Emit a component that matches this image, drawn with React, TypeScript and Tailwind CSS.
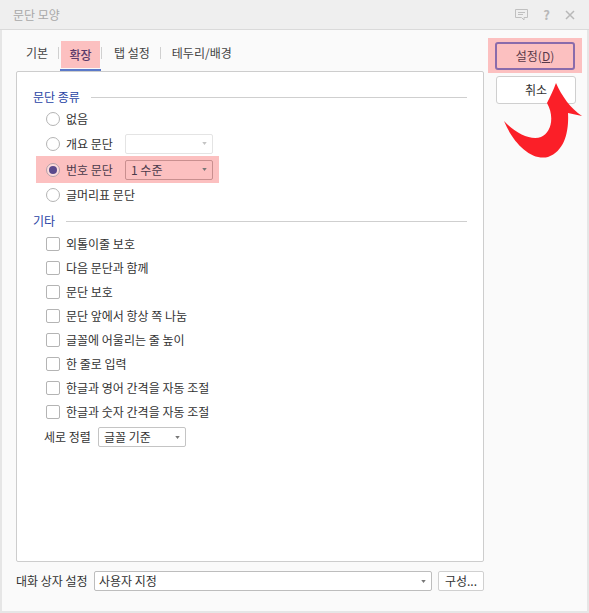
import React from "react";

const font = { fontFamily: '"Noto Sans CJK KR", "Liberation Sans", sans-serif' };

function Radio({ checked }: { checked?: boolean }) {
  return (
    <span className="w-[14px] h-[14px] rounded-full border border-[#b4b4b4] bg-white flex items-center justify-center shrink-0">
      {checked && <span className="w-[8px] h-[8px] rounded-full bg-[#5b4a8c]"></span>}
    </span>
  );
}

function Check({ label }: { label: string }) {
  return (
    <div className="h-[24px] flex items-center pl-[29px]">
      <span className="w-[14px] h-[14px] rounded-[2px] border border-[#b4b4b4] bg-white shrink-0"></span>
      <span className="ml-[6px] text-[#333]">{label}</span>
    </div>
  );
}

function Section({ title }: { title: string }) {
  return (
    <div className="flex items-center h-[16px] pl-[16px] pr-[16px]">
      <span className="text-[#2a45a5]">{title}</span>
      <span className="flex-1 h-px bg-[#cfcfcf] ml-[11px]"></span>
    </div>
  );
}

function Caret({ light }: { light?: boolean }) {
  return (
    <svg width="5" height="3" viewBox="0 0 6 4" className="shrink-0">
      <path d="M0 0h6L3 4z" fill={light ? "#c4c4c4" : "#777"} />
    </svg>
  );
}

export default function App() {
  return (
    <div style={font} className="w-[589px] h-[613px] relative bg-[#e6e6e6] pl-[2px] pr-[2px] pb-[2px] flex flex-col text-[12px] text-[#333] overflow-hidden">
      {/* Title bar */}
      <div className="h-[30px] -mx-[2px] pl-[13px] pr-[12px] bg-[#efefef] border-b border-[#dadada] flex items-center shrink-0">
        <span className="text-[#a8a8a8]">문단 모양</span>
        <div className="ml-auto flex items-center gap-[15px] pr-[2px]">
          <svg width="13" height="12" viewBox="0 0 13 12" fill="none" stroke="#c0c0c0">
            <path d="M.5.5h12v8H9v2.500L6.500 8.500H.5z" />
            <path d="M3 3.500h7M3 5.500h5" />
          </svg>
          <span className="text-[#b8b8b8] font-bold text-[13px] leading-none">?</span>
          <svg width="10" height="10" viewBox="0 0 10 10" stroke="#b8b8b8" strokeWidth="1.500">
            <path d="M1 1l8 8M9 1l-8 8" />
          </svg>
        </div>
      </div>

      <div className="flex-1 bg-[#fafafa] flex pl-[14px]">
        {/* Left column */}
        <div className="w-[468px] flex flex-col">
          <div className="h-[41px] pt-[11px] flex items-start text-[#444]">
            <div className="h-[24px] flex items-center pl-[10px] w-[36px]">기본</div>
            <span className="w-px h-[12px] bg-[#d0d0d0] mt-[6px] ml-[6px]"></span>
            <div className="ml-[1px] w-[41px] h-[30px] border-b-2 border-[#5b79c9] flex justify-center">
              <div className="w-[39px] h-[27px] bg-[#fcc0c0] flex items-center justify-center text-[#5a3a6a] font-medium">확장</div>
            </div>
            <span className="w-px h-[12px] bg-[#d0d0d0] mt-[6px]"></span>
            <div className="h-[24px] flex items-center ml-[12px]">탭 설정</div>
            <span className="w-px h-[12px] bg-[#d0d0d0] mt-[6px] ml-[10px]"></span>
            <div className="h-[24px] flex items-center ml-[11px]">테두리/배경</div>
          </div>

          {/* Panel */}
          <div className="h-[491px] bg-white border border-[#cdcdcd] rounded-[2px] pt-[17px] flex flex-col">
            <Section title="문단 종류" />
            <div className="h-[25px] mt-[1px] flex items-center pl-[29px] gap-[6px]">
              <Radio />
              <span>없음</span>
            </div>
            <div className="h-[25px] flex items-center pl-[29px]">
              <Radio />
              <span className="ml-[6px] w-[59px]">개요 문단</span>
              <div className="w-[88px] h-[20px] border border-[#e4e4e4] rounded-[2px] flex items-center justify-end pr-[5px]">
                <Caret light />
              </div>
            </div>
            <div className="ml-[19px] w-[183px] h-[27px] bg-[#fcc0c0] flex items-center pl-[10px]">
              <span className="w-[14px] h-[14px] rounded-full border border-[#b4a0a8] bg-[#fcdcdc] flex items-center justify-center shrink-0">
                <span className="w-[8px] h-[8px] rounded-full bg-[#5b4a8c]"></span>
              </span>
              <span className="ml-[6px] w-[59px] text-[#4a3a4a]">번호 문단</span>
              <div className="w-[88px] h-[20px] border border-[#c98f8f] rounded-[2px] flex items-center justify-between pl-[5px] pr-[5px] text-[#4a3a4a]">
                <span>1 수준</span>
                <Caret />
              </div>
            </div>
            <div className="h-[23px] flex items-center pl-[29px] gap-[6px]">
              <Radio />
              <span>글머리표 문단</span>
            </div>

            <div className="mt-[7px] mb-[3px]">
              <Section title="기타" />
            </div>
            <Check label="외톨이줄 보호" />
            <Check label="다음 문단과 함께" />
            <Check label="문단 보호" />
            <Check label="문단 앞에서 항상 쪽 나눔" />
            <Check label="글꼴에 어울리는 줄 높이" />
            <Check label="한 줄로 입력" />
            <Check label="한글과 영어 간격을 자동 조절" />
            <Check label="한글과 숫자 간격을 자동 조절" />
            <div className="h-[20px] mt-[3px] flex items-center pl-[27px]">
              <span className="w-[54px]">세로 정렬</span>
              <div className="w-[88px] h-[20px] border border-[#c4c4c4] rounded-[2px] flex items-center justify-between pl-[5px] pr-[5px]">
                <span>글꼴 기준</span>
                <Caret />
              </div>
            </div>
          </div>

          {/* Footer */}
          <div className="mt-[9px] h-[20px] flex items-center">
            <span className="w-[78px]">대화 상자 설정</span>
            <div className="w-[338px] h-[20px] border border-[#bdbdbd] rounded-[2px] bg-white flex items-center justify-between pl-[4px] pr-[5px]">
              <span>사용자 지정</span>
              <Caret />
            </div>
            <div className="ml-[6px] w-[46px] h-[20px] border border-[#d0d0d0] rounded-[2px] bg-white flex items-center justify-center">구성...</div>
          </div>
        </div>

        {/* Right column */}
        <div className="pl-[4px] pt-[8px] flex flex-col">
          <div className="w-[94px] h-[35px] bg-[#fcc0c0] flex items-center justify-center">
            <div className="w-[80px] h-[28px] border-2 border-[#8a6bab] rounded-[3px] flex items-center justify-center text-[#5a3a4a]">
              설정(<span className="underline">D</span>)
            </div>
          </div>
          <div className="ml-[8px] mt-[3px] w-[80px] h-[28px] border border-[#cfcfcf] rounded-[3px] bg-white flex items-center justify-center">취소</div>
        </div>
      </div>

      {/* Red annotation arrow */}
      <svg width="82" height="76" viewBox="0 0 82 76" className="absolute left-[503px] top-[83px]">
        <path
          d="M53 0C58 12 68 26 79 33L65 30C66 48 62 68 45 74C28 78 10 60 1 38C12 50 28 58 38 54C48 50 52 34 44 20C47 14 50 8 53 0Z"
          fill="#fb1f28"
        />
      </svg>
    </div>
  );
}
